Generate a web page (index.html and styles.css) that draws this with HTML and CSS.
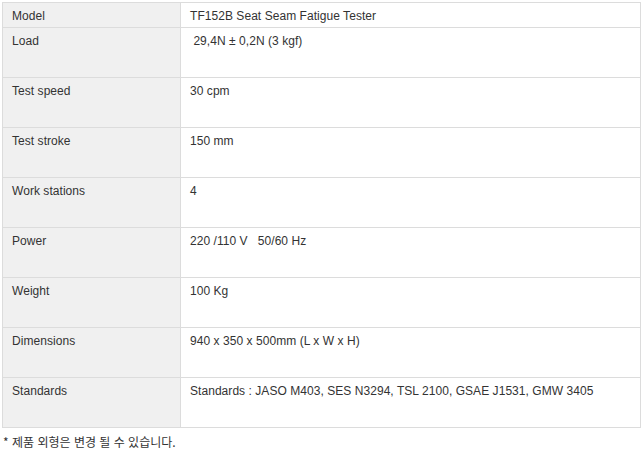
FILE: index.html
```html
<!DOCTYPE html>
<html lang="ko">
<head>
<meta charset="utf-8">
<link rel="stylesheet" href="styles.css">
</head>
<body>
<div class="wrap">
<table class="spec">
  <tr class="first"><th>Model</th><td>TF152B Seat Seam Fatigue Tester</td></tr>
  <tr><th>Load</th><td>&nbsp;29,4N &plusmn; 0,2N (3 kgf)</td></tr>
  <tr><th>Test speed</th><td>30 cpm</td></tr>
  <tr><th>Test stroke</th><td>150 mm</td></tr>
  <tr><th>Work stations</th><td>4</td></tr>
  <tr><th>Power</th><td>220 /110 V &nbsp;&nbsp;50/60 Hz</td></tr>
  <tr><th>Weight</th><td>100 Kg</td></tr>
  <tr><th>Dimensions</th><td>940 x 350 x 500mm (L x W x H)</td></tr>
  <tr><th>Standards</th><td>Standards : JASO M403, SES N3294, TSL 2100, GSAE J1531, GMW 3405</td></tr>
</table>
<p class="note">* 제품 외형은 변경 될 수 있습니다.</p>
</div>
</body>
</html>
```
FILE: styles.css
```css
html, body {
  margin: 0;
  padding: 0;
  background: #fff;
}
.wrap {
  padding: 2px 0 0 2px;
  font-family: "Liberation Sans", "Noto Sans CJK KR", sans-serif;
  font-size: 12px;
  color: #333;
}
.spec {
  border-collapse: collapse;
  width: 639px;
  table-layout: fixed;
}
.spec th, .spec td {
  border: 1px solid #dcdcdc;
  text-align: left;
  vertical-align: top;
  font-weight: normal;
  height: 50px;
  padding: 6px 9px 0 9px;
  box-sizing: border-box;
  line-height: 14px;
  letter-spacing: 0.05px;
}
.spec th {
  width: 178px;
  background: #f0f0f0;
}
.spec tr.first th, .spec tr.first td {
  height: 25px;
  padding-top: 6px;
}
.note {
  margin: 7px 0 0 1px;
  font-family: "Noto Sans CJK KR", "Liberation Sans", sans-serif;
  font-size: 12px;
  line-height: 14px;
  color: #333;
}
```
